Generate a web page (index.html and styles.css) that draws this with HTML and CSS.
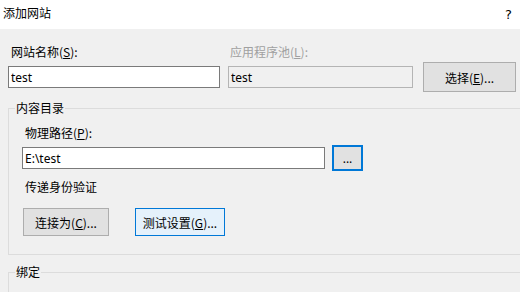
FILE: index.html
```html
<!DOCTYPE html>
<html lang="zh-CN">
<head>
<meta charset="utf-8">
<title>添加网站</title>
<link rel="stylesheet" href="styles.css">
</head>
<body>
<div class="dialog">
  <div class="titlebar">
    <span class="title">添加网站</span>
    <span class="help">?</span>
  </div>
  <div class="main">
    <div class="site-row">
      <label class="lbl">网站名称(<u>S</u>):</label>
      <label class="lbl disabled">应用程序池(<u>L</u>):</label>
      <span></span>
      <input class="tb" type="text" value="test">
      <input class="tb tb-disabled" type="text" value="test" readonly>
      <button class="btn btn-select">选择(<u>E</u>)...</button>
    </div>

    <fieldset class="group">
      <legend>内容目录</legend>
      <div class="group-body">
        <label class="lbl">物理路径(<u>P</u>):</label>
        <div class="path-row">
          <input class="tb tb-path" type="text" value="E:\test">
          <button class="btn btn-browse">...</button>
        </div>
        <div class="lbl auth">传递身份验证</div>
        <div class="btn-row">
          <button class="btn btn-connect">连接为(<u>C</u>)...</button>
          <button class="btn btn-test">测试设置(<u>G</u>)...</button>
        </div>
      </div>
    </fieldset>

    <fieldset class="group group-binding">
      <legend>绑定</legend>
      <div class="group-body"></div>
    </fieldset>
  </div>
</div>
</body>
</html>
```

FILE: styles.css
```css
* { box-sizing: border-box; }
html, body {
  margin: 0;
  padding: 0;
  width: 520px;
  height: 292px;
  overflow: hidden;
  background: #f0f0f0;
  font-family: "Noto Sans", "Noto Sans CJK SC", sans-serif;
  font-size: 12px;
  color: #000;
}
.dialog { width: 520px; height: 292px; overflow: hidden; }

.titlebar {
  height: 29px;
  background: #fff;
  display: flex;
  justify-content: space-between;
  align-items: flex-start;
}
.title {
  line-height: 16px;
  margin-top: 5px;
  padding-left: 3px;
  font-family: "Noto Sans CJK SC", sans-serif;
}
.help {
  line-height: 16px;
  margin-top: 7px;
  margin-right: 8px;
  font-size: 13px;
  font-family: "DejaVu Sans", sans-serif;
}

.main { padding-left: 8px; }

.lbl {
  display: block;
  line-height: 16px;
  padding-left: 3px;
  font-family: "Noto Sans CJK SC", sans-serif;
}
.lbl u { text-underline-offset: 1px; }
.disabled { color: #a0a0a0; padding-left: 2px; }

.site-row {
  display: grid;
  grid-template-columns: 212px 185px 95px;
  grid-template-rows: 16px 30px;
  column-gap: 8px;
  row-gap: 2px;
  align-items: center;
  padding-top: 15px;
}

.tb {
  height: 22px;
  border: 1px solid #7a7a7a;
  background: #fff;
  font-family: "Noto Sans", sans-serif;
  font-size: 12px;
  padding: 0 2px;
  margin: 0;
  color: #000;
  outline: none;
}
.tb-disabled {
  border-color: #b4b4b4;
  background: #f0f0f0;
}

.btn {
  font-family: "Noto Sans CJK SC", sans-serif;
  font-size: 12px;
  background: #e1e1e1;
  border: 1px solid #adadad;
  color: #000;
  padding: 0;
  margin: 0;
}
.btn u { text-underline-offset: 1px; }
.btn-select { height: 30px; margin-left: 2px; }

.group {
  margin: 8px -20px 0 0;
  padding: 0;
  border: 1px solid #dcdcdc;
  min-width: 0;
}
.group legend {
  margin-left: 6px;
  padding: 0 1px;
  line-height: 16px;
  font-family: "Noto Sans CJK SC", sans-serif;
}
.group-body {
  padding: 9px 0 18px 13px;
}

.path-row {
  display: flex;
  align-items: center;
  height: 26px;
  margin-top: 4px;
}
.tb-path { width: 303px; }
.btn-browse {
  width: 31px;
  height: 26px;
  margin-left: 7px;
  border: 2px solid #0078d7;
  font-family: "Noto Sans", sans-serif;
  line-height: 1;
  padding-top: 2px;
}
.auth { margin-top: 8px; }

.btn-row {
  display: flex;
  gap: 26px;
  margin-top: 13px;
}
.btn-connect { width: 86px; height: 28px; margin-left: 1px; }
.btn-test {
  width: 90px;
  height: 28px;
  background: #e5f1fb;
  border-color: #0078d7;
}

.group-binding { margin-top: 9px; }
.group-binding .group-body { height: 40px; padding: 0; }
```
